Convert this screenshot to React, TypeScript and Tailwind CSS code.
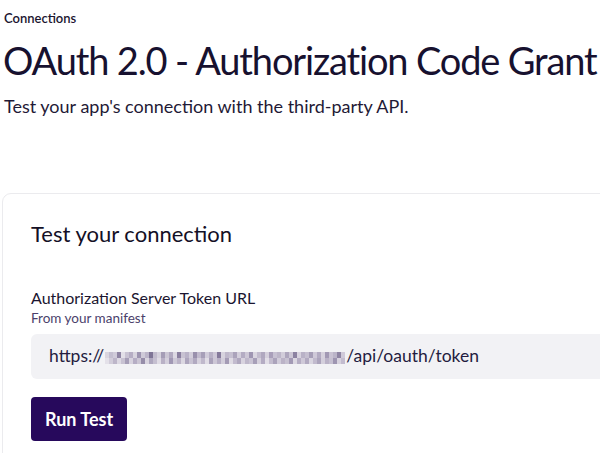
import React from "react";

const blocks: string[][] = [
  ["bg-[#d9d5df]", "bg-[#c4bfd0]", "bg-[#d0cbd9]", "bg-[#8f85a3]", "bg-[#e3e0e8]", "bg-[#c9c3d3]", "bg-[#b6aec4]", "bg-[#d8d4de]", "bg-[#9d94b0]", "bg-[#cfcad8]", "bg-[#bcb5c9]", "bg-[#7f7596]", "bg-[#c2bccd]", "bg-[#d6d2dd]", "bg-[#a59db6]", "bg-[#cbc6d4]", "bg-[#b1a9c0]", "bg-[#dcd8e2]", "bg-[#8a7f9f]", "bg-[#c8c2d2]", "bg-[#bab3c8]", "bg-[#d3cedb]", "bg-[#9990ac]", "bg-[#c1bacd]", "bg-[#a79fb8]", "bg-[#d1ccda]", "bg-[#b8b1c6]", "bg-[#cec8d7]", "bg-[#857a9b]", "bg-[#d7d3de]", "bg-[#bfb8cb]", "bg-[#c6c0d1]", "bg-[#aba3bb]", "bg-[#d4cfdc]", "bg-[#b4acc3]", "bg-[#cdc7d6]", "bg-[#9f96b2]", "bg-[#dad6e0]", "bg-[#c3bcce]", "bg-[#b0a8bf]", "bg-[#d5d0dc]", "bg-[#a99fba]", "bg-[#c7c1d2]", "bg-[#bdb6c9]", "bg-[#d2cdda]", "bg-[#aea6bd]", "bg-[#ccc6d5]", "bg-[#8c82a1]", "bg-[#d8d3df]", "bg-[#b9b2c7]", "bg-[#c5bfd0]", "bg-[#a69eb7]", "bg-[#cfc9d8]", "bg-[#b3abc2]", "bg-[#d6d1dd]", "bg-[#a299b4]", "bg-[#c9c2d3]", "bg-[#bbb4c8]", "bg-[#8f85a3]", "bg-[#d0cad9]"],
  ["bg-[#e4e1e9]", "bg-[#d2cdda]", "bg-[#bdb6c9]", "bg-[#ddd9e3]", "bg-[#c8c2d2]", "bg-[#a69eb7]", "bg-[#d7d2de]", "bg-[#b5adc4]", "bg-[#cbc5d4]", "bg-[#968da9]", "bg-[#d9d4df]", "bg-[#aea7be]", "bg-[#c5bfd0]", "bg-[#e0dce5]", "bg-[#b9b1c6]", "bg-[#d4cfdc]", "bg-[#a198b4]", "bg-[#cec9d7]", "bg-[#bcb4c8]", "bg-[#dbd7e1]", "bg-[#ada5bd]", "bg-[#c9c3d3]", "bg-[#b1a9c0]", "bg-[#d6d1dd]", "bg-[#c0b9cc]", "bg-[#e1dde6]", "bg-[#aaa2ba]", "bg-[#cdc7d6]", "bg-[#b7afc5]", "bg-[#d3cedb]", "bg-[#a49bb5]", "bg-[#dfdbe4]", "bg-[#c2bbce]", "bg-[#b0a8bf]", "bg-[#d8d3df]", "bg-[#bfb8cb]", "bg-[#cac4d4]", "bg-[#a79fb8]", "bg-[#d5d0dc]", "bg-[#b4acc3]", "bg-[#e2dee7]", "bg-[#c4bdcf]", "bg-[#aba3bb]", "bg-[#d1ccda]", "bg-[#bbb3c7]", "bg-[#c7c1d1]", "bg-[#a39ab5]", "bg-[#dcd8e2]", "bg-[#b6aec4]", "bg-[#cfc9d8]", "bg-[#b2aac1]", "bg-[#d9d5e0]", "bg-[#c1bacd]", "bg-[#aca4bc]", "bg-[#d4cfdc]", "bg-[#bab2c7]", "bg-[#c6c0d1]", "bg-[#9e95b1]", "bg-[#d7d2de]", "bg-[#c3bccf]"],
];

function Blur() {
  return (
    <span className="inline-flex flex-col mx-[1px] translate-y-[1px]">
      {blocks.map((row, i) => (
        <span key={i} className="flex">
          {row.map((c, j) => (
            <span key={j} className={`block w-[4px] h-[6px] ${c}`} />
          ))}
        </span>
      ))}
    </span>
  );
}

export default function App() {
  return (
    <div
      className="w-[600px] h-[453px] overflow-hidden bg-white text-[#17112f]"
      style={{ fontFamily: "Lato, 'Open Sans', sans-serif" }}
    >
      <div className="pl-[4px] pt-[9px] text-[13px] font-semibold leading-[18px] text-[#1b1530]">
        Connections
      </div>
      <h1 className="pl-[3px] mt-[11px] text-[38px] leading-[44px] font-normal tracking-[-1.15px] whitespace-nowrap">
        OAuth 2.0 - Authorization Code Grant
      </h1>
      <p className="pl-[4px] mt-[12px] text-[18px] leading-[24px] text-[#1f1a36]">
        Test your app's connection with the third-party API.
      </p>
      <div className="ml-[2px] mt-[75px] w-[660px] h-[300px] rounded-[9px] border border-[#ebebee] pl-[28px] pt-[25px]">
        <h2 className="text-[22px] leading-[30px] text-[#141026]">Test your connection</h2>
        <div className="mt-[39px] text-[16px] leading-[20px] text-[#1b1530]">
          Authorization Server Token URL
        </div>
        <div className="mt-[2px] text-[13.5px] leading-[16px] text-[#4b3f6b]">From your manifest</div>
        <div className="mt-[8px] h-[45px] rounded-[6px] bg-[#f2f2f5] pl-[18px] flex items-center text-[17.5px] text-[#241c3f]">
          <span>https://</span>
          <Blur />
          <span>/api/oauth/token</span>
        </div>
        <button className="mt-[18px] h-[44px] px-[14px] rounded-[4px] bg-[#27095c] text-white text-[18px] font-bold">
          Run Test
        </button>
      </div>
    </div>
  );
}
